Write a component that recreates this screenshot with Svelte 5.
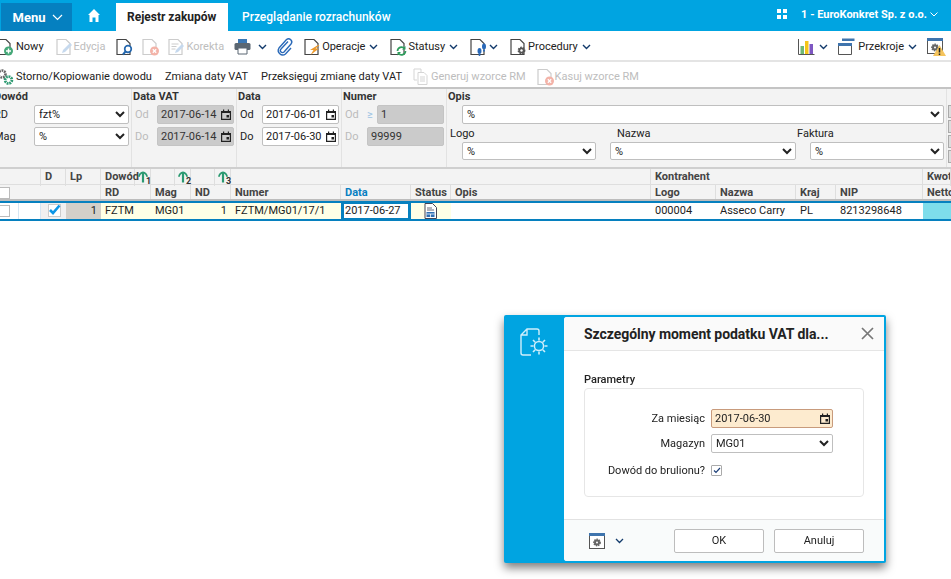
<script>
  const bar1 = [
    { icon: 'new', label: 'Nowy', ml: 0 },
    { icon: 'edit', label: 'Edycja', ml: 12, off: true },
    { icon: 'find', ml: 11 },
    { icon: 'del', ml: 11, off: true },
    { icon: 'fix', label: 'Korekta', ml: 11, off: true },
    { icon: 'print', ml: 10, chev: true },
    { icon: 'clip', ml: 10 },
    { icon: 'bolt', label: 'Operacje', ml: 10, chev: true },
    { icon: 'sync', label: 'Statusy', ml: 12, chev: true },
    { icon: 'steps', ml: 12, chev: true },
    { icon: 'gear', label: 'Procedury', ml: 12, chev: true }
  ];
  const bar2 = [
    { icon: 'gears', label: 'Storno/Kopiowanie dowodu', ml: 0 },
    { label: 'Zmiana daty VAT', ml: 13 },
    { label: 'Przeksięguj zmianę daty VAT', ml: 13 },
    { icon: 'copy', label: 'Generuj wzorce RM', ml: 11, off: true },
    { icon: 'del', label: 'Kasuj wzorce RM', ml: 11, off: true }
  ];
  const head2 = ['', 'RD', 'Mag', 'ND', 'Numer', 'Data', 'Status', 'Opis', 'Logo', 'Nazwa', 'Kraj', 'NIP', 'Netto'];
</script>

{#snippet doc(off = false)}
  <path d="M1 1.500h9l4 4v11H1z" fill="#fff" stroke={off ? '#ccc' : '#444'} stroke-width="1.200"/>
{/snippet}

{#snippet chevron()}
  <svg class="chev" width="9" height="6" viewBox="0 0 9 6"><path d="M1 1l3.500 3.500L8 1" fill="none" stroke="#123a6b" stroke-width="1.400"/></svg>
{/snippet}

{#snippet cal()}
  <svg class="cal" width="10" height="11" viewBox="0 0 10 11"><path d="M.6 2.500h8.800v7.900H.6z" fill="none" stroke="#222" stroke-width="1.200"/><path d="M0 2h10v2H0zM2 .5h1.200V2H2zM6.800 .5H8V2H6.800zM5.500 6H8v2.500H5.500z" fill="#222"/></svg>
{/snippet}

{#snippet icon(name)}
  {#if name === 'print'}
    <svg class="print" width="17" height="17" viewBox="0 0 17 17"><path d="M4 1h9v4H4z" fill="#3b78b5"/><rect x="0.500" y="5" width="16" height="7" rx="1.500" fill="#5b6772"/><path d="M4 10h9v6H4z" fill="#fff" stroke="#5b6772"/></svg>
  {:else if name === 'clip'}
    <svg width="17" height="18" viewBox="0 0 17 18"><path d="M11 3.500L4 11a2 2 0 0 0 3 3l7-8a3.200 3.200 0 0 0-4.500-4.500L2 10a4.500 4.500 0 0 0 6.500 6L14 10" fill="none" stroke="#2a69b8" stroke-width="1.400"/></svg>
  {:else if name === 'copy'}
    <svg width="15" height="17" viewBox="0 0 15 17"><path d="M1 1h7v3M1 1v11h3" fill="none" stroke="#d5d5d5"/><path d="M5 4.500h6l3 3v9H5z" fill="#fff" stroke="#d5d5d5"/><path d="M7 9h5M7 11h5M7 13h5" stroke="#d5d5d5"/></svg>
  {:else if name === 'gears'}
    <svg class="ico" width="18" height="18" viewBox="0 0 18 18"><circle cx="6" cy="6" r="3.500" fill="none" stroke="#666" stroke-width="2.600" stroke-dasharray="1.800 0.800"/><circle cx="12.500" cy="12" r="3.400" fill="none" stroke="#2f9a72" stroke-width="2.800" stroke-dasharray="1.800 0.800"/></svg>
  {:else}
    <svg class="ico" width="18" height="18" viewBox="0 0 18 18">
      {@render doc(name === 'edit' || name === 'del' || name === 'fix')}
      {#if name === 'new'}
        <circle cx="12.500" cy="13" r="4.500" fill="#45a878"/><path d="M12.500 10.500v5M10 13h5" stroke="#fff" stroke-width="1.400"/>
      {:else if name === 'edit'}
        <path d="M7 12l7-7 2 2-7 7-3 1z" fill="#c6d9ee"/>
      {:else if name === 'fix'}
        <path d="M3.500 6h7M3.500 8.500h5M3.500 11h4" stroke="#ccc"/><path d="M8 12l6-6 2 2-6 6-3 1z" fill="#c6d9ee"/>
      {:else if name === 'find'}
        <circle cx="12" cy="11" r="3.300" fill="#fff" stroke="#2567ad" stroke-width="1.700"/><path d="M9.500 13.500L7 16.500" stroke="#2567ad" stroke-width="2"/>
      {:else if name === 'del'}
        <circle cx="12.500" cy="13" r="4.500" fill="#f3b3a8"/><path d="M10.800 11.300l3.400 3.400M14.200 11.300l-3.400 3.400" stroke="#fff" stroke-width="1.300"/>
      {:else if name === 'bolt'}
        <path d="M14 7l-8 5h3.500l-3 5 8.500-6.500h-3.500l4-3.500z" fill="#ee9a2c"/>
      {:else if name === 'sync'}
        <path d="M7.500 13a4 4 0 0 1 7-2.500M15.500 13a4 4 0 0 1-7 2.500" fill="none" stroke="#2f9d5d" stroke-width="1.700"/><path d="M15.500 8v3.500H12M7.500 17.500V14H11" fill="#2f9d5d"/>
      {:else if name === 'steps'}
        <ellipse cx="9.500" cy="13" rx="2" ry="3" fill="#2a69b8"/><ellipse cx="14" cy="8.500" rx="2" ry="3" fill="#2a69b8"/><circle cx="9.500" cy="17" r="1" fill="#2a69b8"/><circle cx="14" cy="12.800" r="1" fill="#2a69b8"/>
      {:else if name === 'gear'}
        <circle cx="11.500" cy="12.500" r="3" fill="#555" stroke="#555" stroke-width="1.800" stroke-dasharray="1.500 1"/><circle cx="11.500" cy="12.500" r="1.200" fill="#fff"/>
      {/if}
    </svg>
  {/if}
{/snippet}

{#snippet winGear(size)}
  <svg width={size} height={size} viewBox="0 0 16 16"><rect x="0.500" y="0.500" width="15" height="15" fill="#fff" stroke="#555"/><rect x="0" y="0" width="16" height="3" fill="#3f74ad"/><circle cx="8" cy="9.500" r="3" fill="#666" stroke="#666" stroke-width="1.800" stroke-dasharray="1.400 0.800"/><circle cx="8" cy="9.500" r="1" fill="#fff"/></svg>
{/snippet}

{#snippet sort(n)}
  <span class="sort">
    <svg width="10" height="12" viewBox="0 0 10 12"><path d="M5 11.500V2" fill="none" stroke="#2c9a72" stroke-width="2.200"/><path d="M1 5.800C1 3.500 3 1.500 5 1.500S9 3.500 9 5.800" fill="none" stroke="#2c9a72" stroke-width="1.800"/></svg>
    <i>{n}</i>
  </span>
{/snippet}

<div class="page">
  <header class="top">
    <div class="menu">Menu <svg width="11" height="7" viewBox="0 0 11 7"><path d="M1 1l4.500 4.500L10 1" fill="none" stroke="#fff" stroke-width="1.200"/></svg></div>
    <svg class="home" width="12" height="13" viewBox="0 0 12 13"><path d="M6 0L0 6h1.500v7h3V8.500h3V13h3V6H12z" fill="#fff"/></svg>
    <div class="tab active">Rejestr zakupów</div>
    <div class="tab">Przeglądanie rozrachunków</div>
    <div class="firm">
      <svg width="11" height="11" viewBox="0 0 11 11"><path d="M0 0h4v4H0zM6 0h4v4H6zM0 6h4v4H0zM6 6h4v4H6z" fill="#fff"/></svg>
      <b>1 - EuroKonkret Sp. z o.o.</b>
      <svg width="8" height="5" viewBox="0 0 8 5"><path d="M.5.500L4 4 7.500.500" fill="none" stroke="#fff"/></svg>
    </div>
  </header>

  <div class="bar one">
    {#each bar1 as t}
      <div class="tool" class:off={t.off} style="margin-left:{t.ml}px">
        {@render icon(t.icon)}
        {#if t.label}<span>{t.label}</span>{/if}
        {#if t.chev}{@render chevron()}{/if}
      </div>
    {/each}
    <div class="right">
      <div class="tool">
        <svg width="17" height="17" viewBox="0 0 17 17"><path d="M.5 1v15.500h16" fill="none" stroke="#555"/><rect x="2.500" y="8" width="3.500" height="8" fill="#6fb874"/><rect x="7" y="3" width="3.500" height="13" fill="#f5c518"/><rect x="11.500" y="6" width="3.500" height="10" fill="#7e57c2"/></svg>
        {@render chevron()}
      </div>
      <div class="tool">
        <svg width="17" height="17" viewBox="0 0 17 17"><path d="M4 .500h12.500V3H4z" fill="#3f74ad"/><path d="M.5 5.500h13v11H.5z" fill="#fff" stroke="#555"/><path d="M0 5h14v3H0z" fill="#3f74ad"/></svg>
        <span>Przekroje</span>
        {@render chevron()}
      </div>
      <div class="warn">
        {@render winGear(16)}
        <svg class="tri" width="13" height="11" viewBox="0 0 13 11"><path d="M6.500 0L13 11H0z" fill="#f5c45c"/><path d="M6.500 3v4.500M6.500 8.500V10" stroke="#222" stroke-width="1.500"/></svg>
      </div>
    </div>
  </div>

  <div class="bar two">
    {#each bar2 as t}
      <div class="tool" class:off={t.off} style="margin-left:{t.ml}px">
        {#if t.icon}{@render icon(t.icon)}{/if}
        <span>{t.label}</span>
      </div>
    {/each}
  </div>

  <section class="filters">
    <div class="group dow">
      <h4>Dowód</h4>
      <div class="pair"><label for="rd">RD</label><select id="rd"><option>fzt%</option></select></div>
      <div class="pair"><label for="mag">Mag</label><select id="mag"><option>%</option></select></div>
    </div>
    <div class="group dates">
      <h4>Data VAT</h4>
      <div class="pair"><span class="dim">Od</span><div class="date"><input value="2017-06-14" disabled />{@render cal()}</div></div>
      <div class="pair"><span class="dim">Do</span><div class="date"><input value="2017-06-14" disabled />{@render cal()}</div></div>
    </div>
    <div class="group dates">
      <h4>Data</h4>
      <div class="pair"><span>Od</span><div class="date"><input value="2017-06-01" />{@render cal()}</div></div>
      <div class="pair"><span>Do</span><div class="date"><input value="2017-06-30" />{@render cal()}</div></div>
    </div>
    <div class="group num">
      <h4>Numer</h4>
      <div class="pair"><span class="dim">Od</span><b class="ge">≥</b><input class="short" value="1" disabled /></div>
      <div class="pair"><span class="dim">Do</span><input class="long" value="99999" disabled /></div>
    </div>
    <div class="group opis">
      <h4>Opis</h4>
      <select class="wide"><option>%</option></select>
      <div class="subs">
        <div class="sub s1"><span>Logo</span><select><option>%</option></select></div>
        <div class="sub s2"><span>Nazwa</span><select><option>%</option></select></div>
        <div class="sub s3"><span>Faktura</span><select><option>%</option></select></div>
      </div>
    </div>
    <div class="minis"><i></i><i></i><i></i><i></i></div>
  </section>

  <section class="grid">
    <div class="row h1">
      <div class="c"></div><div class="c">D</div><div class="c">Lp</div>
      <div class="c nb">Dowód</div>
      <div class="c s">{@render sort(1)}</div><div class="c nb"></div>
      <div class="c s">{@render sort(2)}</div><div class="c nb"></div>
      <div class="c s">{@render sort(3)}</div>
      <div class="c"></div><div class="c">Kontrahent</div><div class="c">Kwot</div>
    </div>
    <div class="row h2">
      {#each head2 as h, i}
        <div class="c" class:data={h === 'Data'} class:dl={i === 0}>
          {#if i === 0}<span class="cb"></span>{:else}{h}{/if}
        </div>
      {/each}
    </div>
    <div class="sel">
      <div class="row body">
        <div class="d wh"><span class="cb"></span></div>
        <div class="d wh"></div>
        <div class="d dc">
          <svg width="13" height="13" viewBox="0 0 13 13"><rect x=".5" y=".5" width="12" height="12" fill="#fff" stroke="#ccc"/><path d="M2 6l3 3 6.500-7.500" fill="none" stroke="#0d96e6" stroke-width="2.600"/></svg>
        </div>
        <div class="d lp">1</div>
        <div class="d y">FZTM</div>
        <div class="d y">MG01</div>
        <div class="d y r">1</div>
        <div class="d y">FZTM/MG01/17/1</div>
        <div class="d edit"><span>2017-06-27</span></div>
        <div class="d y st">
          <svg width="13" height="16" viewBox="0 0 13 16"><path d="M1 .5h7.500l4 4v11H1z" fill="#fff" stroke="#445"/><path d="M3 5h5M3 7h7" stroke="#445" stroke-width=".8"/><path d="M2.500 9h8v5h-8z" fill="#2f6fb3"/><path d="M2.500 11h8M6.500 11v3" stroke="#fff" stroke-width=".8"/></svg>
        </div>
        <div class="d"></div>
        <div class="d">000004</div>
        <div class="d">Asseco Carry</div>
        <div class="d">PL</div>
        <div class="d">8213298648</div>
        <div class="d cy"></div>
      </div>
    </div>
  </section>
</div>

<div class="dialog">
  <aside>
    <svg width="30" height="31" viewBox="0 0 30 31">
      <path d="M12 27H4a2 2 0 0 1-2-2V7l6-6h10a2 2 0 0 1 2 2v4M8 1v6H2" fill="none" stroke="#cfeefb" stroke-width="1.400"/>
      <circle cx="20" cy="18" r="4.600" fill="none" stroke="#cfeefb" stroke-width="1.500"/>
      <path d="M20 9.500v3M20 23.500v3M11.500 18h3M25.500 18h3M14 12l2.200 2.200M23.800 21.800L26 24M14 24l2.200-2.200M23.800 14.200L26 12" stroke="#cfeefb" stroke-width="1.600"/>
    </svg>
  </aside>
  <div class="main">
    <div class="dhead">
      <h2>Szczególny moment podatku VAT dla...</h2>
      <svg width="13" height="13" viewBox="0 0 13 13"><path d="M1 1l11 11M12 1L1 12" stroke="#777" stroke-width="1.700"/></svg>
    </div>
    <div class="dbody">
      <h5>Parametry</h5>
      <div class="params">
        <label for="mies">Za miesiąc</label><div class="date"><input id="mies" class="req" value="2017-06-30" />{@render cal()}</div>
        <label for="dmag">Magazyn</label><select id="dmag"><option>MG01</option></select>
        <span>Dowód do brulionu?</span>
        <span class="chk"><svg width="8" height="7" viewBox="0 0 8 7"><path d="M1 3.500L3 5.500 7 1" fill="none" stroke="#1d3f78" stroke-width="1.200"/></svg></span>
      </div>
    </div>
    <div class="dfoot">
      {@render winGear(16)}
      <svg class="fchev" width="9" height="6" viewBox="0 0 9 6"><path d="M1 1l3.500 3.500L8 1" fill="none" stroke="#123a6b" stroke-width="1.300"/></svg>
      <button class="ok">OK</button>
      <button>Anuluj</button>
    </div>
  </div>
</div>

<style>
  :global(body) { margin: 0; background: #fff; overflow: hidden; font-family: Roboto, sans-serif; }
  svg { display: block; flex: none; overflow: visible; }
  .page { width: 957px; height: 579px; margin-left: -6px; font: 11px Roboto, sans-serif; color: #222; overflow: hidden; }

  .top { height: 31px; background: #00a4e1; display: flex; align-items: flex-end; padding-left: 7px; color: #fff; }
  .menu { width: 71px; height: 28px; background: #0580c0; display: flex; align-items: center; justify-content: center; gap: 7px; font-size: 13px; font-weight: 700; box-sizing: border-box; padding-left: 3px; }
  .home { margin: 0 16px 9px 16px; }
  .tab { height: 28px; display: flex; align-items: center; font-size: 12px; padding: 0 14px; font-weight: 500; }
  .tab.active { background: #fff; color: #222; padding: 0 11px; font-weight: 700; width: 112px; box-sizing: border-box; }
  .firm { margin-left: auto; display: flex; align-items: center; gap: 13px; height: 28px; font-size: 11px; padding: 0 13px 6px 0; box-sizing: border-box; }
  .firm b { font-weight: 700; margin-right: -10px; }

  .bar { display: flex; align-items: center; box-sizing: border-box; padding-left: 2px; }
  .bar.one { height: 31px; border-bottom: 2px solid #e4e4e4; padding-right: 6px; padding-top: 2px; }
  .bar.two { height: 27px; border-bottom: 2px solid #c4c4c4; padding-top: 4px; }
  .tool { display: flex; align-items: center; gap: 3px; white-space: nowrap; font-size: 11px; }
  .tool.off { color: #bdbdbd; }
  .tool :global(.ico) { margin-right: -3px; }
  .tool :global(.print) { margin-right: 3px; }
  .tool:first-child span { margin-left: 2px; }
  .right .tool:first-child span { margin-left: 0; }
  .chev { margin-left: 1px; }
  .right { margin-left: auto; display: flex; align-items: center; gap: 10px; }
  .warn { position: relative; width: 18px; height: 18px; }
  .tri { position: absolute; right: -1px; bottom: 0; }

  .filters { height: 80px; background: #f3f3f3; display: grid; grid-template-columns: 138px 105px 105px 105px 500px 4px; box-sizing: border-box; border-bottom: 2px solid #cfcfcf; }
  .group { border-right: 1px solid #e2e2e2; padding-left: 1px; position: relative; box-sizing: border-box; }
  .group.dow { padding-left: 0; }
  h4 { margin: 0; font-size: 11px; font-weight: 700; color: #333; height: 16px; line-height: 15px; }
  .pair { display: flex; align-items: flex-start; height: 22px; line-height: 19px; }
  .dim { color: #bbb; }
  select, input { font: 11px Roboto, sans-serif; color: #222; border: 1px solid #bfbfbf; border-radius: 2px; background: #fff; height: 19px; box-sizing: border-box; margin: 0; padding: 0 3px; outline: none; }
  select { padding: 0; }
  input:disabled { background: #cbcbcb; border-color: #c4c4c4; color: #333; opacity: 1; }
  .date { position: relative; }
  .date input { width: 100%; display: block; }
  .cal { position: absolute; right: 3px; top: 4px; pointer-events: none; }
  .dow .pair label { width: 40px; }
  .dow select { width: 95px; }
  .dates .pair span { width: 24px; padding-left: 2px; box-sizing: border-box; }
  .dates .date { width: 77px; }
  .num .pair span { width: 24px; padding-left: 2px; box-sizing: border-box; }
  .ge { width: 10px; color: #9cc3e4; font-weight: 400; }
  .short { width: 67px; }
  .long { width: 77px; padding-left: 3px; }
  .wide { width: 482px; margin: 0 0 0 14px; display: block; }
  .subs { display: flex; }
  .sub { display: flex; flex-direction: column; height: 36px; }
  .sub span { height: 18px; line-height: 19px; }
  .sub select { width: 100%; }
  .s1 { width: 134px; margin-left: 14px; }
  .s1 span { margin-left: -12px; }
  .s2 { width: 186px; margin-left: 14px; }
  .s2 span { margin-left: 7px; }
  .s3 { width: 134px; margin-left: 14px; }
  .s3 span { margin-left: -13px; }
  .minis { display: flex; flex-direction: column; gap: 2px; padding: 16px 0 0 1px; }
  .minis i { display: block; width: 10px; height: 13px; background: #ddd; border: 1px solid #aaa; box-sizing: border-box; }

  .grid { background: #f3f3f3; }
  .row { display: grid; box-sizing: border-box; grid-template-rows: 1fr; }
  .h1 { grid-template-columns: 47px 25px 35px 34px 16px 24px 16px 24px 16px 420px 272px 28px; height: 16px; border-bottom: 1px solid #dedede; }
  .h2 { grid-template-columns: 107px 50px 40px 40px 110px 70px 40px 200px 65px 80px 40px 87px 34px; height: 16px; border-bottom: 2px solid #bcbcbc; }
  .c { font-weight: 700; color: #444; font-size: 11px; line-height: 15px; padding-left: 4px; border-right: 1px solid #dedede; box-sizing: border-box; overflow: hidden; white-space: nowrap; position: relative; }
  .h1 .c:nth-child(4) { overflow: visible; }
  .h1 .s { padding: 0 0 0 3px; overflow: visible; }
  .sort { display: flex; position: relative; z-index: 1; }
  .sort svg { margin-top: 2px; }
  .sort i { font: 700 9px/9px Roboto, sans-serif; margin: 8px 0 0 -2px; color: #333; }
  .data { color: #0780c2; }
  .cb { display: block; width: 13px; height: 12px; border: 1px solid #bbb; background: #fff; box-sizing: border-box; margin-left: 3px; }
  .c.dl { padding: 2px 0 0 0; }

  .sel { border-top: 2px solid #0680bf; border-bottom: 2px solid #0680bf; background: #fff; }
  .body { grid-template-columns: 25px 22px 25px 35px 50px 40px 40px 110px 70px 40px 200px 65px 80px 40px 87px 34px; height: 16px; }
  .d { padding-left: 4px; font-size: 11px; line-height: 16px; box-sizing: border-box; white-space: nowrap; }
  .wh { background: #fff; border-right: 1px solid #d6e6f2; padding: 2px 0 0 0; }
  .dc { background: #f0f0f0; padding: 1px 0 0 7px; }
  .lp { background: #d3cfc9; text-align: right; padding: 0 4px 0 0; }
  .y { background: #ffffe6; }
  .r { text-align: right; padding-right: 4px; }
  .edit { background: #fff; position: relative; padding: 0; }
  .edit span { position: absolute; inset: -2px 0; border: 3px solid #0680bf; box-sizing: border-box; line-height: 14px; text-indent: 1px; background: #fff; }
  .st { padding: 0 0 0 13px; }
  .cy { background: #7eddeb; }

  .dialog { position: fixed; left: 504px; top: 315px; width: 382px; height: 248px; background: #00a4e1; box-shadow: 0 5px 10px rgba(0,0,0,.5); border-radius: 2px; display: flex; padding: 2px 2px 2px 0; box-sizing: border-box; font: 11px Roboto, sans-serif; color: #222; }
  aside { width: 60px; flex: none; padding: 11px 0 0 15px; box-sizing: border-box; }
  .main { flex: 1; background: #fff; border-radius: 3px 0 0 3px; display: flex; flex-direction: column; overflow: hidden; }
  .dhead { height: 34px; background: #fafafa; border-bottom: 1px solid #e5e5e5; display: flex; align-items: center; justify-content: space-between; padding: 0 10px 0 20px; box-sizing: border-box; }
  h2 { margin: 0; font-size: 14px; font-weight: 700; color: #222; letter-spacing: -.05px; }
  .dbody { flex: 1; padding: 20px 20px 0; }
  h5 { margin: 0 0 1px; font-size: 11px; font-weight: 500; height: 16px; line-height: 18px; }
  .params { height: 109px; border: 1px solid #e6e6e6; border-radius: 4px; box-sizing: border-box; padding: 20px 30px 0 0; display: grid; grid-template-columns: 120px 122px; column-gap: 6px; row-gap: 6px; grid-auto-rows: 19px; align-items: center; }
  .params > label, .params > span:not(.chk) { text-align: right; white-space: nowrap; }
  .params > span:not(.chk) { margin-top: 4px; }
  .params .date, .params select { width: 122px; }
  .req { background: #fdebcf; border-color: #c89b7c; }
  .chk { width: 11px; height: 11px; border: 1px solid #aaa; border-radius: 1px; display: flex; align-items: center; justify-content: center; box-sizing: border-box; margin-top: 4px; }
  .dfoot { height: 42px; border-top: 1px solid #e2e2e2; background: #f9fbfb; display: flex; align-items: center; padding: 0 20px 0 25px; box-sizing: border-box; }
  .fchev { margin: 0 50px 0 10px; }
  button { width: 90px; height: 24px; background: #fff; border: 1px solid #bdbdbd; border-radius: 2px; font: 11px Roboto, sans-serif; color: #222; padding: 0; }
  .ok { margin-right: 10px; }
</style>
